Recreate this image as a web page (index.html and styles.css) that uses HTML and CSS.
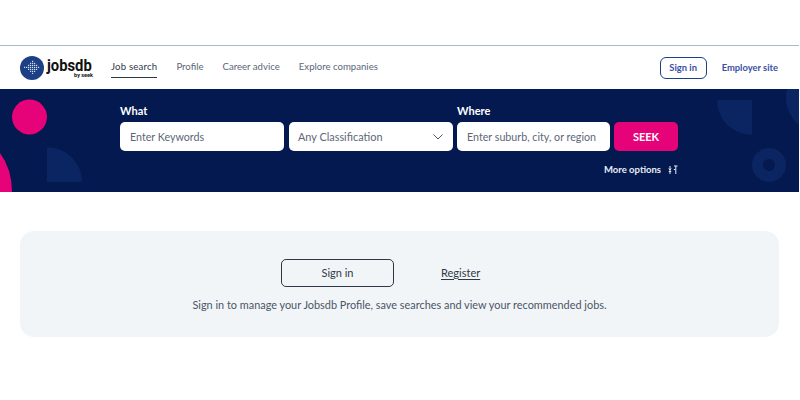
FILE: index.html
```html
<!DOCTYPE html>
<html lang="en">
<head>
    <meta charset="UTF-8">
    <title>Jobsdb</title>
    <link rel="stylesheet" href="styles.css">
</head>
<body>
    <header class="topbar">
        <a class="logo">
            <svg class="logo-mark" width="24" height="24" viewBox="0 0 24 24">
                <circle cx="12" cy="12" r="12" fill="#1c3f85"/>
                <g fill="#cfdcf0">
                    <rect x="4" y="10.8" width="1.2" height="1.2"/><rect x="6" y="10.8" width="1.2" height="1.2"/>
                    <rect x="8" y="8.8" width="1.2" height="1.2"/><rect x="8" y="10.8" width="1.2" height="1.2"/><rect x="8" y="12.8" width="1.2" height="1.2"/>
                    <rect x="10" y="6.8" width="1.2" height="1.2"/><rect x="10" y="8.8" width="1.2" height="1.2"/><rect x="10" y="10.8" width="1.2" height="1.2"/><rect x="10" y="12.8" width="1.2" height="1.2"/><rect x="10" y="14.8" width="1.2" height="1.2"/>
                    <rect x="12" y="4.8" width="1.2" height="1.2"/><rect x="12" y="6.8" width="1.2" height="1.2"/><rect x="12" y="8.8" width="1.2" height="1.2"/><rect x="12" y="10.8" width="1.2" height="1.2"/><rect x="12" y="12.8" width="1.2" height="1.2"/><rect x="12" y="14.8" width="1.2" height="1.2"/><rect x="12" y="16.8" width="1.2" height="1.2"/>
                    <rect x="14" y="6.8" width="1.2" height="1.2"/><rect x="14" y="8.8" width="1.2" height="1.2"/><rect x="14" y="10.8" width="1.2" height="1.2"/><rect x="14" y="12.8" width="1.2" height="1.2"/><rect x="14" y="14.8" width="1.2" height="1.2"/>
                    <rect x="16" y="8.8" width="1.2" height="1.2"/><rect x="16" y="10.8" width="1.2" height="1.2"/><rect x="16" y="12.8" width="1.2" height="1.2"/>
                    <rect x="18" y="10.8" width="1.2" height="1.2"/>
                </g>
            </svg>
            <span class="logo-text">
                <span class="logo-name">jobsdb</span>
                <span class="logo-sub">by seek</span>
            </span>
        </a>
        <nav class="nav">
            <a class="nav-link active">Job search</a>
            <a class="nav-link">Profile</a>
            <a class="nav-link">Career advice</a>
            <a class="nav-link">Explore companies</a>
        </nav>
        <div class="top-actions">
            <a class="top-signin">Sign in</a>
            <a class="employer">Employer site</a>
        </div>
    </header>

    <section class="hero">
        <svg class="hero-shapes" width="799" height="103" viewBox="0 0 799 103">
            <circle cx="29.5" cy="28" r="17.5" fill="#e60278"/>
            <path d="M0 64 Q12 80 12 103 L0 103 Z" fill="#e60278"/>
            <path d="M47 58 A35 35 0 0 1 82 93 L47 93 Z" fill="#0a2562"/>
            <path d="M717 11 L752 11 L752 46 A35 35 0 0 1 717 11 Z" fill="#0a2562"/>
            <path d="M787 0 L799 0 L799 36 A35 35 0 0 1 787 0 Z" fill="#0a2562"/>
            <circle cx="769" cy="76" r="11.5" fill="none" stroke="#0a2562" stroke-width="11"/>
        </svg>
        <form class="search">
            <div class="search-row">
                <label class="field field-what">
                    <span class="field-label">What</span>
                    <span class="input placeholder">Enter Keywords</span>
                </label>
                <div class="field field-class">
                    <span class="input placeholder select">
                        Any Classification
                        <svg width="10" height="6" viewBox="0 0 10 6"><path d="M0.5 0.5l4.5 4.5 4.5-4.5" fill="none" stroke="#4a5568" stroke-width="1"/></svg>
                    </span>
                </div>
                <label class="field field-where">
                    <span class="field-label">Where</span>
                    <span class="input placeholder">Enter suburb, city, or region</span>
                </label>
                <button class="seek" type="button">SEEK</button>
            </div>
            <div class="more">
                More options
                <svg width="10" height="10" viewBox="0 0 10 10"><path d="M2 1v8M0.8 3.5L2 5l1.2-1.5M0.8 6.5h2.4M6 1h3.5M7.8 1v8M5.8 4.5h1.5" fill="none" stroke="#e8edf5" stroke-width="1"/></svg>
            </div>
        </form>
    </section>

    <main class="content">
        <div class="card">
            <div class="card-actions">
                <a class="card-signin">Sign in</a>
                <a class="register">Register</a>
            </div>
            <p class="card-text">Sign in to manage your Jobsdb Profile, save searches and view your recommended jobs.</p>
        </div>
    </main>
</body>
</html>
```

FILE: styles.css
```css
body {
    margin: 0;
    padding-top: 45px;
    width: 799px;
    font-family: Lato, Arial, sans-serif;
    background: #fff;
    color: #2e3849;
}
.topbar {
    display: flex;
    align-items: center;
    height: 43px;
    padding: 0 21px 0 20px;
    border-top: 1px solid #a3bdc9;
}
.logo {
    display: flex;
    align-items: center;
    gap: 3px;
    width: 91px;
}
.logo-text {
    display: flex;
    flex-direction: column;
    width: 46px;
    color: #111;
}
.logo-name {
    font-family: Roboto, sans-serif;
    font-weight: 700;
    font-size: 17px;
    line-height: 14px;
    transform: scaleX(0.87);
    transform-origin: left;
}
.logo-sub {
    font-family: Roboto, sans-serif;
    font-weight: 700;
    font-size: 5.5px;
    line-height: 6px;
    text-align: right;
}
.nav {
    display: flex;
    gap: 19px;
    flex: 1;
}
.nav-link {
    font-size: 9.6px;
    line-height: 12px;
    color: #5d6679;
    padding: 4px 0;
    border-bottom: 1px solid transparent;
}
.nav-link.active {
    letter-spacing: 0.2px;
    color: #2e3849;
    border-bottom-color: #2e3849;
}
.top-actions {
    display: flex;
    align-items: center;
    gap: 15px;
    font-size: 9.4px;
    font-weight: 700;
    color: #3a50a5;
}
.top-signin {
    box-sizing: border-box;
    border: 1px solid #1c3f85;
    border-radius: 6px;
    width: 47px;
    height: 22px;
    line-height: 20px;
    text-align: center;
}
.hero {
    position: relative;
    height: 103px;
    background: #03194f;
    overflow: hidden;
}
.hero-shapes {
    position: absolute;
    left: 0;
    top: 0;
}
.search {
    position: relative;
    padding: 15px 0 0 120px;
}
.search-row {
    display: flex;
    align-items: flex-end;
    gap: 5px;
}
.field {
    display: flex;
    flex-direction: column;
}
.field-what, .field-class { width: 164px; }
.field-where { width: 153px; margin-left: -1px; }
.field-label {
    font-size: 11px;
    font-weight: 700;
    color: #fff;
    line-height: 14px;
    margin-bottom: 4px;
}
.input {
    display: flex;
    align-items: center;
    height: 29px;
    padding: 0 10px;
    background: #fff;
    border-radius: 5px;
    font-size: 10.7px;
    box-sizing: border-box;
}
.placeholder { color: #5d6679; }
.select {
    justify-content: space-between;
    padding-left: 9px;
    font-size: 10.9px;
}
.seek {
    width: 64px;
    height: 29px;
    border: none;
    border-radius: 5px;
    background: #e60278;
    color: #fff;
    font: 700 11px Lato, Arial, sans-serif;
    margin-left: -1px;
}
.more {
    display: flex;
    align-items: center;
    justify-content: flex-end;
    gap: 7px;
    width: 558px;
    margin-top: 13px;
    font-size: 9.5px;
    font-weight: 700;
    color: #e8edf5;
}
.content {
    padding: 39px 20px 0;
}
.card {
    height: 106px;
    box-sizing: border-box;
    padding-top: 28px;
    background: #f2f5f7;
    border-radius: 14px;
    text-align: center;
}
.card-actions {
    display: flex;
    align-items: center;
    margin-left: 261px;
    gap: 47px;
}
.card-signin {
    box-sizing: border-box;
    width: 113px;
    height: 28px;
    line-height: 25px;
    border: 1.5px solid #2e3849;
    border-radius: 5px;
    font-size: 11px;
}
.register {
    font-size: 11px;
    line-height: 13px;
    margin-top: -2px;
    text-decoration: underline;
    text-underline-offset: 2px;
}
.card-text {
    margin: 11px 0 0;
    font-size: 10.9px;
    color: #4a5568;
}
```
